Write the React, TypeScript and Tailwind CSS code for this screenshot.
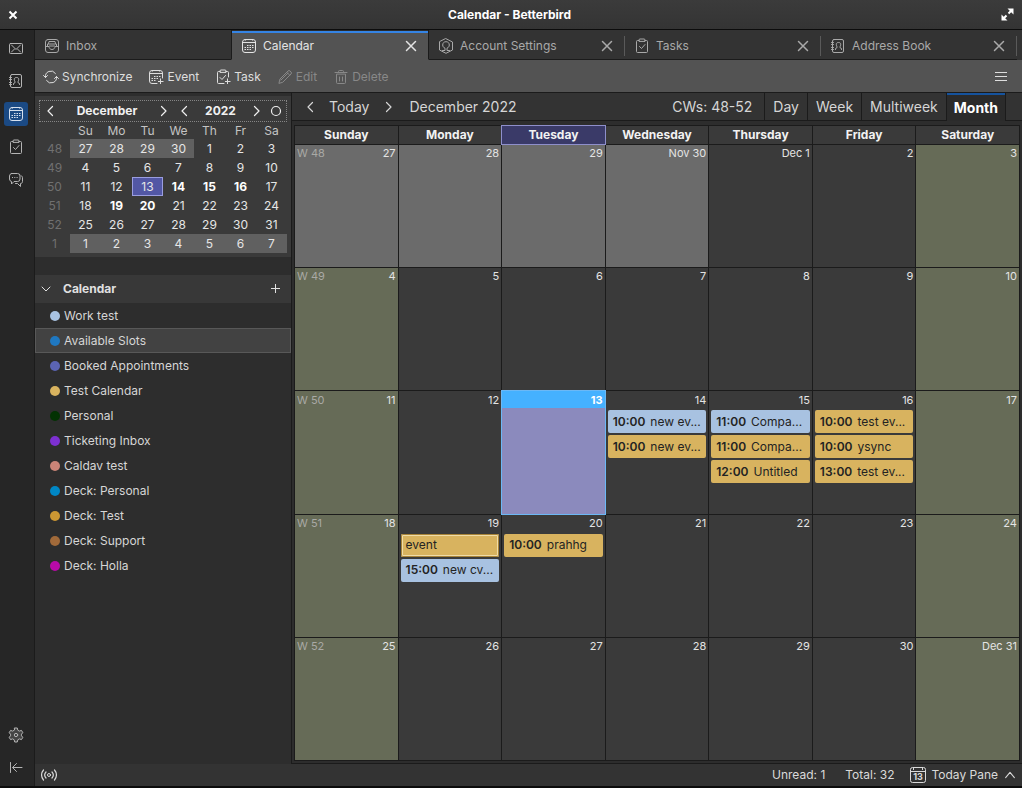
import { type ReactNode } from "react";
import { clsx } from "clsx";

interface IconProps {
  className?: string;
}

function Svg({ className = "size-4", children }: IconProps & { children: ReactNode }) {
  return (
    <svg viewBox="0 0 16 16" fill="none" stroke="currentColor" strokeLinecap="round" strokeLinejoin="round" aria-hidden="true" className={clsx("shrink-0", className)}>
      {children}
    </svg>
  );
}

const MailIcon = (p: IconProps) => (
  <Svg {...p}>
    <rect x="1.5" y="3.5" width="13" height="10" rx="1" />
    <path d="M3.5 5 8 9.500 12.500 5M3.500 12l3-3M12.500 12l-3-3" />
  </Svg>
);

const AddressBookIcon = (p: IconProps) => (
  <Svg {...p}>
    <rect x="2.5" y="1.5" width="11" height="13" rx="1.5" />
    <path d="M1.500 4.500h2M1.500 6.500h2M1.500 9.500h2M1.500 11.500h2" />
    <path d="M5.500 11.500v-1l1.500-.8V8.800C6.600 8.200 6.300 7.500 6.300 6.300 6.300 5 7.100 4.500 8.500 4.500s2.200.5 2.200 1.800c0 1.200-.3 1.900-.7 2.500v.9l1.500.8v1" />
  </Svg>
);

const CalendarIcon = (p: IconProps) => (
  <Svg {...p}>
    <rect x="1.500" y="1.500" width="13" height="13" rx="2.500" />
    <path strokeLinecap="butt" d="M2 4.500h12M4.500 1v1.500M11.500 1v1.500" />
    <path strokeLinecap="butt" d="M6 7.500h1.500M8.500 7.500H10M11 7.500h1.500M3.500 9.500H5M6 9.500h1.500M8.500 9.500H10M11 9.500h1.500M3.500 11.500H5M6 11.500h1.500M8.500 11.500H10" />
  </Svg>
);

const TasksIcon = (p: IconProps) => (
  <Svg {...p}>
    <path d="M5 2.500H3.500a1 1 0 0 0-1 1v10a1 1 0 0 0 1 1h9a1 1 0 0 0 1-1v-10a1 1 0 0 0-1-1H11" />
    <path d="M5 3V2a1 1 0 0 1 1-1h4a1 1 0 0 1 1 1v1zM5.500 8.500l2 2 3.500-4" />
  </Svg>
);

const ChatIcon = (p: IconProps) => (
  <Svg {...p}>
    <path d="M3.500 1.500h6a2.500 2.500 0 0 1 2.500 2.500v3a2.500 2.500 0 0 1-2.500 2.500H6L3.500 12V9.500A2.500 2.500 0 0 1 1.500 7V4a2.500 2.500 0 0 1 2-2.500z" />
    <path d="M13 3.500c1 .5 1.500 1.500 1.500 2.500v3.500c0 1.200-.8 2-2 2v3L9.500 11.500H7.500" />
    <path strokeLinecap="butt" d="M4 5.500h1M6.300 5.500h1M8.600 5.500h1" />
  </Svg>
);

const GearIcon = (p: IconProps) => (
  <Svg {...p}>
    <path fill="#454545" d="M6.700 1h2.600l.5 2.200 1.500.9 2.200-.7 1.300 2.300-1.300 1.500v1.600l1.300 1.500-1.300 2.300-2.200-.7-1.500.9L9.300 15H6.700l-.5-2.200-1.500-.9-2.200.7-1.300-2.300 1.300-1.500V7.200L1.200 5.700l1.300-2.300 2.200.7 1.500-.9z" />
    <circle cx="8" cy="8" r="1.700" />
  </Svg>
);

const CollapseIcon = (p: IconProps) => (
  <Svg {...p}>
    <path d="M2.500 2.500v10M14 7.500H5M8.500 3.500l-4 4 4 4" />
  </Svg>
);

const InboxIcon = (p: IconProps) => (
  <Svg {...p}>
    <rect x="1.500" y="1.500" width="13" height="13" rx="2.500" />
    <path d="M1.500 8.500h3.500c0 1.800 1.300 3 3 3s3-1.200 3-3h3.500M3.500 8V6h9v2M4.500 5.500l.5-2h6l.5 2M5.500 8h5" />
  </Svg>
);

const AccountIcon = (p: IconProps) => (
  <Svg {...p}>
    <path d="M8 .7 14.500 4v8L8 15.300 1.500 12V4z" />
    <path d="M4.500 12.500H7V10.200C5.500 9.600 4.700 8.500 4.700 7 4.700 5 6 3.700 8 3.700S11.300 5 11.300 7c0 1.500-.8 2.600-2.300 3.200v2.300h2.500" />
  </Svg>
);

const SyncIcon = (p: IconProps) => (
  <Svg {...p}>
    <path d="M2.500 8.500a5.500 5.500 0 0 1 10-4M13.500 7.500a5.500 5.500 0 0 1-10 4M.5 6.500l2 2 2-2M11.500 9.500l2-2 2 2" />
  </Svg>
);

const EventIcon = (p: IconProps) => (
  <Svg {...p}>
    <path d="M9 14.500H4A2.500 2.500 0 0 1 1.500 12V4A2.500 2.500 0 0 1 4 1.500h8A2.500 2.500 0 0 1 14.500 4v5" />
    <path strokeLinecap="butt" d="M2 4.500h12M4.500 1v1.500M11.500 1v1.500M12.500 9.500v5.500M10 12.500h5.500" />
    <path strokeLinecap="butt" d="M6 7.500h1.500M8.500 7.500H10M11 7.500h1.500M3.500 9.500H5M6 9.500h1.500M8.500 9.500H10M3.500 11.500H5M6 11.500h1.500" />
  </Svg>
);

const NewTaskIcon = (p: IconProps) => (
  <Svg {...p}>
    <path d="M9 14.500H3.500a1 1 0 0 1-1-1v-10a1 1 0 0 1 1-1H5M11 2.500h1.500a1 1 0 0 1 1 1V8" />
    <path d="M5 3V2a1 1 0 0 1 1-1h4a1 1 0 0 1 1 1v1zM5 8.500l2 2 3.500-4" />
    <path strokeLinecap="butt" d="M12.500 9.500v5.500M10 12.500h5.500" />
  </Svg>
);

const EditIcon = (p: IconProps) => (
  <Svg {...p}>
    <path d="m2 14 1-4 8-8a1.400 1.400 0 0 1 2 0l1 1a1.400 1.400 0 0 1 0 2l-8 8zM10 3.500 12.500 6M4 11l7-7" />
  </Svg>
);

const TrashIcon = (p: IconProps) => (
  <Svg {...p}>
    <path d="M2 3.500h12M5.500 3V2.500a1 1 0 0 1 1-1h3a1 1 0 0 1 1 1V3M3.500 5.500v8a1 1 0 0 0 1 1h7a1 1 0 0 0 1-1v-8zM6.500 8v4M9.500 8v4" />
  </Svg>
);

const CloseIcon = (p: IconProps) => (
  <Svg {...p}>
    <path strokeWidth="1.500" d="m3.500 3.500 9 9M12.500 3.500l-9 9" />
  </Svg>
);

const BroadcastIcon = (p: IconProps) => (
  <Svg {...p}>
    <circle cx="8" cy="8" r="1.500" />
    <path strokeWidth="1.200" d="M5 5a4.500 4.500 0 0 0 0 6M11 5a4.500 4.500 0 0 1 0 6M2.500 3a7.500 7.500 0 0 0 0 10M13.500 3a7.500 7.500 0 0 1 0 10" />
  </Svg>
);

const LeftIcon = (p: IconProps) => (
  <Svg {...p}>
    <path strokeWidth="1.200" d="M10.500 3.500 6 8l4.500 4.500" />
  </Svg>
);

const RightIcon = (p: IconProps) => (
  <Svg {...p}>
    <path strokeWidth="1.200" d="M5.500 3.500 10 8l-4.500 4.500" />
  </Svg>
);

const spaces = [
  { label: "Mail", Icon: MailIcon },
  { label: "Address Book", Icon: AddressBookIcon },
  { label: "Calendar", Icon: CalendarIcon, active: true },
  { label: "Tasks", Icon: TasksIcon },
  { label: "Chat", Icon: ChatIcon },
];

const tabs = [
  { label: "Inbox", Icon: InboxIcon, closable: false },
  { label: "Calendar", Icon: CalendarIcon, closable: true, active: true },
  { label: "Account Settings", Icon: AccountIcon, closable: true, divider: true },
  { label: "Tasks", Icon: TasksIcon, closable: true, divider: true },
  { label: "Address Book", Icon: AddressBookIcon, closable: true, divider: true },
];

const calendars = [
  { name: "Work test", color: "bg-[#a8c2e1]" },
  { name: "Available Slots", color: "bg-[#1f78c1]", selected: true },
  { name: "Booked Appointments", color: "bg-[#5b64b3]" },
  { name: "Test Calendar", color: "bg-[#d8b35f]" },
  { name: "Personal", color: "bg-[#033203]" },
  { name: "Ticketing Inbox", color: "bg-[#7d30d1]" },
  { name: "Caldav test", color: "bg-[#ca8477]" },
  { name: "Deck: Personal", color: "bg-[#0087c5]" },
  { name: "Deck: Test", color: "bg-[#cc9733]" },
  { name: "Deck: Support", color: "bg-[#a16a3a]" },
  { name: "Deck: Holla", color: "bg-[#b90aa8]" },
];

const miniWeeks = [
  { week: 48, days: [27, 28, 29, 30, 1, 2, 3] },
  { week: 49, days: [4, 5, 6, 7, 8, 9, 10] },
  { week: 50, days: [11, 12, 13, 14, 15, 16, 17] },
  { week: 51, days: [18, 19, 20, 21, 22, 23, 24] },
  { week: 52, days: [25, 26, 27, 28, 29, 30, 31] },
  { week: 1, days: [1, 2, 3, 4, 5, 6, 7] },
];
const busyDays = [14, 15, 16, 19, 20];

const weekdays = ["Sunday", "Monday", "Tuesday", "Wednesday", "Thursday", "Friday", "Saturday"];

const monthWeeks = [
  { week: 48, days: ["27", "28", "29", "Nov 30", "Dec 1", "2", "3"] },
  { week: 49, days: ["4", "5", "6", "7", "8", "9", "10"] },
  { week: 50, days: ["11", "12", "13", "14", "15", "16", "17"] },
  { week: 51, days: ["18", "19", "20", "21", "22", "23", "24"] },
  { week: 52, days: ["25", "26", "27", "28", "29", "30", "Dec 31"] },
];

interface CalEvent {
  time?: string;
  title: string;
  color: "blue" | "gold";
}

const events: Record<string, CalEvent[]> = {
  "14": [
    { time: "10:00", title: "new ev...", color: "blue" },
    { time: "10:00", title: "new ev...", color: "gold" },
  ],
  "15": [
    { time: "11:00", title: "Compa...", color: "blue" },
    { time: "11:00", title: "Compa...", color: "gold" },
    { time: "12:00", title: "Untitled", color: "gold" },
  ],
  "16": [
    { time: "10:00", title: "test ev...", color: "gold" },
    { time: "10:00", title: "ysync", color: "gold" },
    { time: "13:00", title: "test ev...", color: "gold" },
  ],
  "19": [
    { title: "event", color: "gold" },
    { time: "15:00", title: "new cv...", color: "blue" },
  ],
  "20": [{ time: "10:00", title: "prahhg", color: "gold" }],
};

function TitleBar() {
  return (
    <header className="flex h-[30px] shrink-0 items-center justify-between border-b border-[#0c0c0c] bg-linear-to-b from-[#3b3b3b] to-[#343434] px-2 text-white">
      <button aria-label="Close window">
        <svg viewBox="0 0 10 10" className="size-[10px]" stroke="currentColor" strokeWidth="2">
          <path d="m1.500 1.500 7 7M8.500 1.500l-7 7" />
        </svg>
      </button>
      <h1 className="text-[12px] font-bold">Calendar - Betterbird</h1>
      <button aria-label="Maximize window">
        <svg viewBox="0 0 13 13" className="size-[13px]" fill="currentColor" stroke="currentColor">
          <path strokeWidth="2" d="m2 11 3.500-3.500M11 2 7.500 5.500" />
          <path stroke="none" d="M6.500.5h6v6zM.5 6.500v6h6z" />
        </svg>
      </button>
    </header>
  );
}

function SpacesBar() {
  return (
    <nav aria-label="Spaces" className="flex w-[35px] shrink-0 flex-col items-center border-r border-[#1b1b1b] bg-[#262626] pt-1.5 pr-0.5 pb-1.5 text-[#b4b4b4]">
      <div className="flex flex-1 flex-col gap-[9px]">
        {spaces.map(({ label, Icon, active }) => (
          <button key={label} aria-label={label} className={clsx("flex size-6 items-center justify-center rounded-[3px]", active && "bg-[#1b4a84] text-[#d6e0ee]")}>
            <Icon />
          </button>
        ))}
      </div>
      <div className="flex flex-col gap-[9px]">
        <button aria-label="Settings" className="flex size-6 items-center justify-center"><GearIcon /></button>
        <button aria-label="Collapse" className="flex size-6 items-center justify-center"><CollapseIcon /></button>
      </div>
    </nav>
  );
}

function TabStrip() {
  return (
    <div role="tablist" className="flex h-[30px] shrink-0 bg-[#333] pr-[5px]">
      {tabs.map(({ label, Icon, closable, active, divider }) => (
        <div
          key={label}
          className={clsx(
            "flex min-w-0 flex-1 items-center border-b pt-0.5",
            active ? "border-x border-x-[#1b1b1b] border-b-[#535353] bg-[#535353] text-[#e4e4e4] shadow-[inset_0_1px_#2b2b2b,inset_0_3px_#3584e4]" : "border-b-[#1b1b1b] text-[#a9a9a9]",
          )}
        >
          <button role="tab" aria-selected={!!active} className="flex min-w-0 flex-1 items-center gap-1.5 pl-[9px] text-left text-[12px]">
            <Icon />
            {label}
          </button>
          {closable && (
            <button aria-label={`Close ${label}`} className="pr-[9px]"><CloseIcon /></button>
          )}
          {divider && <span className="h-5 w-px bg-[#5a5a5a]" />}
        </div>
      ))}
    </div>
  );
}

function ToolButton({ icon, label, disabled }: { icon: ReactNode; label: string; disabled?: boolean }) {
  return (
    <button disabled={disabled} className={clsx("flex items-center gap-[3px]", disabled ? "text-[#888]" : "text-[#dedede]")}>
      {icon}
      {label}
    </button>
  );
}

function Toolbar() {
  return (
    <div className="flex h-[33px] shrink-0 items-center gap-4 border-b border-[#1b1b1b] bg-[#535353] pt-px pr-[15px] pl-2 text-[12px]">
      <ToolButton icon={<SyncIcon />} label="Synchronize" />
      <ToolButton icon={<EventIcon />} label="Event" />
      <ToolButton icon={<NewTaskIcon />} label="Task" />
      <ToolButton icon={<EditIcon />} label="Edit" disabled />
      <ToolButton icon={<TrashIcon />} label="Delete" disabled />
      <button aria-label="Menu" className="ml-auto text-[#dedede]">
        <svg viewBox="0 0 12 12" className="size-3" stroke="currentColor">
          <path d="M0 1.500h12M0 5.500h12M0 9.500h12" />
        </svg>
      </button>
    </div>
  );
}

function MiniMonth() {
  return (
    <section className="mt-[3px] bg-[#3a3a3a] px-1 pt-1 pb-1">
      <div className="flex h-[22px] items-center border border-dotted border-[#858585] px-0.5 text-[12px] font-bold text-[#f0f0f0]">
        <button aria-label="Previous month"><LeftIcon /></button>
        <span className="flex-1 text-center">December</span>
        <button aria-label="Next month"><RightIcon /></button>
        <button aria-label="Previous year" className="ml-1"><LeftIcon /></button>
        <span className="w-[57px] text-center">2022</span>
        <button aria-label="Next year"><RightIcon /></button>
        <button aria-label="Go to today" className="ml-[3px]">
          <Svg><circle cx="8" cy="8" r="4.500" strokeWidth="1.200" /></Svg>
        </button>
      </div>
      <table className="w-full table-fixed border-collapse text-center text-[12px] leading-[19px] text-[#e6e6e6]">
        <thead>
          <tr>
            <th className="w-[31px] p-0" />
            {weekdays.map((d) => (
              <th key={d} className="p-0 leading-[17px] font-normal text-[#c4c4c4]">{d.slice(0, 2)}</th>
            ))}
          </tr>
        </thead>
        <tbody>
          {miniWeeks.map(({ week, days }, row) => (
            <tr key={week}>
              <th className="p-0 font-normal text-[#707070]">{week}</th>
              {days.map((d, col) => {
                const outside = (row === 0 && col < 4) || row === 5;
                const today = row === 2 && d === 13;
                return (
                  <td
                    key={d}
                    className={clsx(
                      "h-[19px] p-0",
                      outside && "bg-[#606060]",
                      today && "bg-[#5257a5] shadow-[inset_0_0_0_1px_#9a9de0]",
                      !outside && row > 1 && row < 4 && busyDays.includes(d) && "font-bold text-white",
                    )}
                  >
                    {d}
                  </td>
                );
              })}
            </tr>
          ))}
        </tbody>
      </table>
    </section>
  );
}

function CalendarList() {
  return (
    <section className="mt-[18px]">
      <div className="flex h-7 items-center bg-[#383838] pr-2 pl-[3px] text-[#e0e0e0]">
        <button className="flex flex-1 items-center gap-2 text-left text-[12px] font-bold">
          <Svg><path d="M4 6l4 4 4-4" /></Svg>
          <span className="pl-px">Calendar</span>
        </button>
        <button aria-label="New calendar">
          <Svg><path strokeLinecap="butt" d="M8.500 3v9M4 7.500h9" /></Svg>
        </button>
      </div>
      <ul className="text-[12px] text-[#d6d6d6]">
        {calendars.map(({ name, color, selected }) => (
          <li key={name} className={clsx("flex h-[25px] items-center gap-1 border px-3.5", selected ? "border-[#585858] bg-[#424242]" : "border-transparent")}>
            <span className={clsx("size-2.5 rounded-full", color)} />
            {name}
          </li>
        ))}
      </ul>
    </section>
  );
}

function ViewHeader() {
  const view = "flex items-center border-l border-b border-[#1b1b1b] px-2";
  return (
    <div className="flex h-7 shrink-0 bg-[#333] text-[14px] text-[#d6d6d6]">
      <div className="flex flex-1 items-center border-b border-[#1b1b1b] pl-2.5">
        <button aria-label="Previous"><LeftIcon /></button>
        <button className="pr-3 pl-[11px]">Today</button>
        <button aria-label="Next"><RightIcon /></button>
        <h2 className="pl-3">December 2022</h2>
        <span className="ml-auto pr-3">CWs: 48-52</span>
      </div>
      <button className={view}>Day</button>
      <button className={view}>Week</button>
      <button className={view}>Multiweek</button>
      <button className="border-x border-[#1b1b1b] bg-[#2b2b2b] px-[7px] font-bold text-white shadow-[inset_0_2px_#15539e]">Month</button>
      <span className="w-4 border-b border-[#1b1b1b]" />
    </div>
  );
}

function EventChip({ event }: { event: CalEvent }) {
  return (
    <button
      className={clsx(
        "flex h-[23px] w-full items-center gap-[5px] overflow-hidden rounded-xs px-[5px] text-[12px] whitespace-nowrap text-[#232323]",
        event.color === "blue" ? "bg-[#a8c2e1]" : "bg-[#d8b35f]",
        !event.time && "shadow-[inset_0_0_0_1px_#a88438,inset_0_0_0_2px_#f0dca8]",
      )}
    >
      {event.time && <time className="font-semibold">{event.time}</time>}
      <span>{event.title}</span>
    </button>
  );
}

function MonthGrid() {
  return (
    <table className="mt-1 mr-0.5 mb-0.5 ml-0.5 flex flex-1 flex-col border border-[#1b1b1b] bg-[#1b1b1b]">
      <thead>
        <tr className="grid grid-cols-7 gap-x-px">
          {weekdays.map((d) => (
            <th
              key={d}
              className={clsx(
                "mb-px h-[18px] p-0 text-[12px] leading-[18px] font-bold text-[#f2f2f2]",
                d === "Tuesday" ? "bg-[#3a3a68] shadow-[0_0_0_1px_#8e8fcb]" : "bg-[#3a3a3a]",
              )}
            >
              {d}
            </th>
          ))}
        </tr>
      </thead>
      <tbody className="grid flex-1 grid-rows-5 gap-y-px">
        {monthWeeks.map(({ week, days }, row) => (
          <tr key={week} className="grid grid-cols-7 gap-x-px">
            {days.map((label, col) => {
              const today = label === "13";
              const off = row === 0 && col < 4;
              const weekend = col === 0 || col === 6;
              return (
                <td
                  key={label}
                  className={clsx(
                    "min-w-0 p-0",
                    today ? "bg-[#8b8abd] shadow-[0_0_0_1px_#6cb8f5]" : off ? "bg-[#6b6b6b]" : weekend ? "bg-[#666b57]" : "bg-[#3a3a3a]",
                  )}
                >
                  <div className={clsx("flex h-[17px] items-center justify-between px-0.5 text-[11px]", today ? "bg-[#45b1ff] font-bold text-white" : "text-[#e4e4e4]")}>
                    <span className="text-[#a9a9a5]">{col === 0 && `W ${week}`}</span>
                    <span>{label}</span>
                  </div>
                  {events[label] && row > 0 && (
                    <div className="flex flex-col gap-0.5 px-0.5 pt-0.5">
                      {events[label].map((e, i) => (
                        <EventChip key={i} event={e} />
                      ))}
                    </div>
                  )}
                </td>
              );
            })}
          </tr>
        ))}
      </tbody>
    </table>
  );
}

function StatusBar() {
  return (
    <footer className="flex h-[22px] shrink-0 items-center bg-[#333] pr-[5px] pl-1.5 text-[12px] text-[#dadada]">
      <button aria-label="Online status"><BroadcastIcon className="size-4" /></button>
      <span className="ml-auto">Unread: 1</span>
      <span className="ml-5">Total: 32</span>
      <button className="ml-4 flex items-center gap-[5px]">
        <svg viewBox="0 0 16 16" className="size-4" fill="none" stroke="currentColor">
          <rect x=".5" y=".5" width="15" height="15" rx="2" />
          <path d="M1 4.500h14M3.500 1v2M12.500 1v2" />
          <text x="8" y="13" textAnchor="middle" fontSize="9" fontWeight="700" fill="currentColor" stroke="none">13</text>
        </svg>
        Today Pane
        <Svg className="size-3.5"><path strokeWidth="1.200" d="M3 11l5-6 5 6" /></Svg>
      </button>
    </footer>
  );
}

export default function App() {
  return (
    <div className="flex h-screen flex-col overflow-hidden border-b-2 border-[#0c0c0c] bg-[#2d2d2d] font-['Inter',sans-serif]">
      <TitleBar />
      <div className="flex min-h-0 flex-1">
        <SpacesBar />
        <div className="flex min-w-0 flex-1 flex-col">
          <TabStrip />
          <Toolbar />
          <div className="flex min-h-0 flex-1">
            <aside className="w-64 shrink-0">
              <MiniMonth />
              <CalendarList />
            </aside>
            <main className="flex min-w-0 flex-1 flex-col border-b border-l border-[#1b1b1b]">
              <ViewHeader />
              <MonthGrid />
            </main>
          </div>
          <StatusBar />
        </div>
      </div>
    </div>
  );
}
